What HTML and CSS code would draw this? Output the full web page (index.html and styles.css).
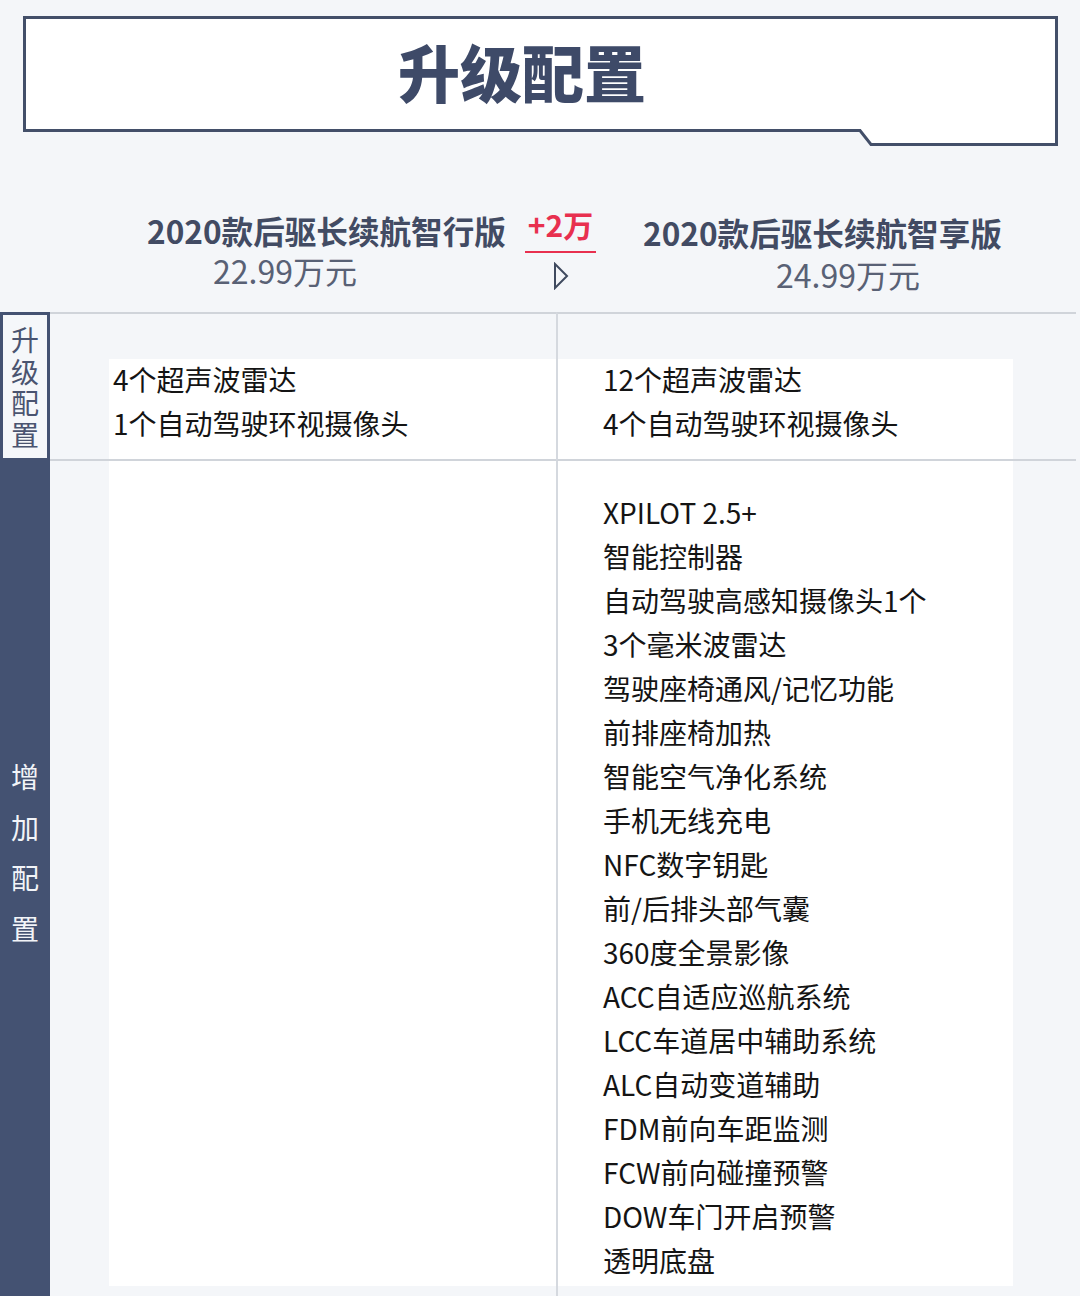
FILE: index.html
```html
<!DOCTYPE html>
<html lang="zh-CN">

<head>
  <meta charset="UTF-8" />
  <meta name="viewport" content="width=device-width, initial-scale=1.0" />
  <title>升级配置</title>
  <link rel="stylesheet" href="styles.css">
</head>

<body>

  <!-- 标题框 -->
  <div class="title-wrap">
    <svg class="title-frame" width="1080" height="150" viewBox="0 0 1080 150">
      <polygon points="24.5,17.5 1056.5,17.5 1056.5,144.5 871,144.5 860,130.5 24.5,130.5" fill="#fff" stroke="#434f69" stroke-width="3" />
    </svg>
    <h1>升级配置</h1>
  </div>

  <!-- 车型对比 -->
  <div class="compare">
    <div class="model model-left">
      <div class="model-name">2020款后驱长续航智行版</div>
      <div class="model-price">22.99万元</div>
    </div>
    <div class="diff">
      <div class="diff-amount">+2万</div>
      <div class="diff-line"></div>
      <svg class="diff-arrow" width="16" height="28" viewBox="0 0 16 28">
        <polygon points="2,2 14,14 2,26" fill="none" stroke="#3f4a5f" stroke-width="2" stroke-linejoin="miter" />
      </svg>
    </div>
    <div class="model model-right">
      <div class="model-name">2020款后驱长续航智享版</div>
      <div class="model-price">24.99万元</div>
    </div>
  </div>

  <!-- 配置表 -->
  <div class="spec-table">
    <div class="side side-upgrade">
      <div class="side-text">升级配置</div>
    </div>
    <div class="cell cell-left row-first">
      <div class="cell-body">
        <div>4个超声波雷达</div>
        <div>1个自动驾驶环视摄像头</div>
      </div>
    </div>
    <div class="cell cell-right row-first">
      <div class="cell-body">
        <div>12个超声波雷达</div>
        <div>4个自动驾驶环视摄像头</div>
      </div>
    </div>

    <div class="side side-added">
      <div class="side-text">增加配置</div>
    </div>
    <div class="cell cell-left row-second">
      <div class="cell-body"></div>
    </div>
    <div class="cell cell-right row-second">
      <div class="cell-body">
        <div>XPILOT 2.5+</div>
        <div>智能控制器</div>
        <div>自动驾驶高感知摄像头1个</div>
        <div>3个毫米波雷达</div>
        <div>驾驶座椅通风/记忆功能</div>
        <div>前排座椅加热</div>
        <div>智能空气净化系统</div>
        <div>手机无线充电</div>
        <div>NFC数字钥匙</div>
        <div>前/后排头部气囊</div>
        <div>360度全景影像</div>
        <div>ACC自适应巡航系统</div>
        <div>LCC车道居中辅助系统</div>
        <div>ALC自动变道辅助</div>
        <div>FDM前向车距监测</div>
        <div>FCW前向碰撞预警</div>
        <div>DOW车门开启预警</div>
        <div>透明底盘</div>
      </div>
    </div>
  </div>

</body>

</html>
```

FILE: styles.css
```css
* {
  box-sizing: border-box;
}

html,
body {
  margin: 0;
  padding: 0;
  background: #f4f6f9;
  font-family: 'Noto Sans CJK SC', 'Noto Sans', sans-serif;
  width: 1080px;
  overflow: hidden;
}

/* 标题 */
.title-wrap {
  position: relative;
  height: 146px;
}

.title-frame {
  position: absolute;
  top: 0;
  left: 0;
}

.title-wrap h1 {
  position: relative;
  margin: 0;
  padding: 40px 36px 0 0;
  font-size: 62px;
  line-height: 62px;
  font-weight: 900;
  color: #3e4a68;
  text-align: center;
}

/* 车型对比 */
.compare {
  display: flex;
  height: 166px;
}

.model-name {
  font-size: 31.6px;
  line-height: 36px;
  font-weight: 700;
  color: #424b63;
  white-space: nowrap;
}

.model-price {
  font-size: 32px;
  line-height: 36px;
  color: #596175;
  white-space: nowrap;
}

.model-left {
  width: 525px;
  padding-top: 66px;
}

.model-left .model-name {
  margin-left: 147px;
}

.model-left .model-price {
  margin: 4px 0 0 213px;
}

.diff {
  width: 71px;
  padding-top: 58px;
  display: flex;
  flex-direction: column;
  align-items: center;
}

.diff-amount {
  font-size: 30px;
  line-height: 40px;
  font-weight: 700;
  color: #e8304f;
}

.diff-line {
  width: 71px;
  height: 2px;
  margin-top: 7px;
  background: #e8304f;
}

.diff-arrow {
  margin-top: 9px;
}

.model-right {
  padding: 68px 0 0 47px;
}

.model-right .model-price {
  margin: 6px 0 0 133px;
}

/* 配置表 */
.spec-table {
  display: grid;
  grid-template-columns: 50px 506px 520px;
}

.side-upgrade {
  border: 3px solid #445272;
  background: #f5f7fa;
  padding-top: 9px;
}

.side-added {
  background: #445272;
  padding-top: 290px;
}

.side-text {
  width: 28px;
  margin: 0 auto;
  font-size: 28px;
  text-align: center;
}

.side-upgrade .side-text {
  line-height: 31.5px;
  color: #4a5470;
}

.side-added .side-text {
  line-height: 50.5px;
  color: #f2f4f8;
}

.cell {
  display: flex;
  flex-direction: column;
  font-size: 28px;
  line-height: 44px;
  color: #141414;
}

.cell-body {
  flex: 1;
  background: #fff;
}

.cell-left {
  padding-left: 59px;
}

.cell-left .cell-body {
  padding-left: 4px;
}

.cell-right {
  border-left: 2px solid #d5d9df;
  padding-right: 63px;
}

.cell-right .cell-body {
  padding-left: 45px;
}

.row-first {
  border-top: 2px solid #d0d4da;
  border-bottom: 2px solid #d0d4da;
  padding-top: 45px;
}

.row-first .cell-body {
  padding-bottom: 12px;
}

.row-first .cell-body div:first-child {
  margin-top: -2px;
}

.row-first .cell-body div:last-child {
  margin-bottom: 2px;
}

.row-second {
  padding-bottom: 10px;
}

.row-second .cell-body {
  padding-top: 29px;
  padding-bottom: 4px;
}
```
